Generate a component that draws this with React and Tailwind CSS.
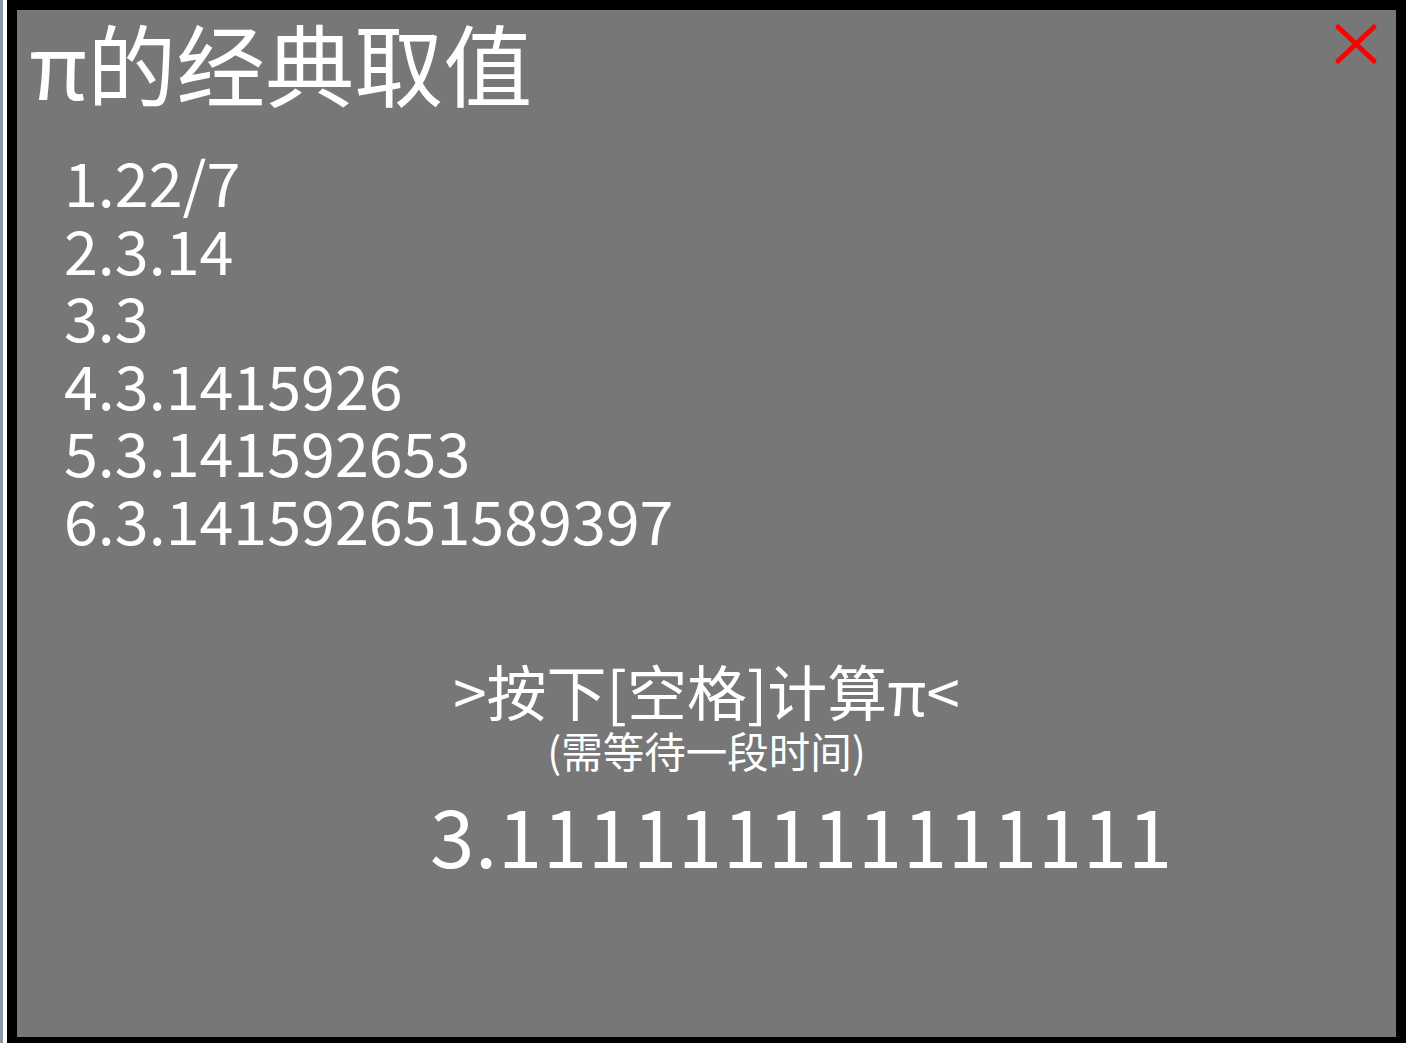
import React from 'react';

const values = ['1.22/7', '2.3.14', '3.3', '4.3.1415926', '5.3.141592653', '6.3.141592651589397'];

const CloseIcon = () => (
  <svg width="44" height="42" viewBox="0 0 44 42" fill="none">
    <path d="M4 4 L40 38 M40 4 L4 38" stroke="#ff0000" strokeWidth="5" strokeLinecap="round" />
  </svg>
);

const App = () => {
  return (
    <div className="flex w-[1406px] h-[1043px] overflow-hidden text-white font-['Microsoft_YaHei','Noto_Sans_CJK_SC',sans-serif]">
      {/* window edge */}
      <div className="w-[3px] bg-[#8b95a9]" />
      <div className="w-[4px] bg-white" />
      <div className="flex-1 flex bg-black pt-[10px] pl-[10px] pr-[10px] pb-[6px]">
        <div className="flex-1 flex flex-col bg-[#777777]">
          {/* header */}
          <div className="flex justify-between items-start">
            <h1 className="pl-[12px] pt-[2px] text-[89px] leading-[100px]">π的经典取值</h1>
            <button className="mt-[13px] mr-[18px]">
              <CloseIcon />
            </button>
          </div>
          {/* list */}
          <ul className="pl-[47px] mt-[35px] text-[61px] leading-[67.5px]">
            {values.map((v) => (
              <li key={v}>{v}</li>
            ))}
          </ul>
          {/* action */}
          <div className="mt-[104px] flex flex-col items-center">
            <p className="text-[60px] leading-[68px]">&gt;按下[空格]计算π&lt;</p>
            <p className="text-[41.5px] leading-[52px]">(需等待一段时间)</p>
          </div>
          <p className="pl-[413px] mt-[12px] text-[80px] leading-[90px] tracking-[0.6px]">3.111111111111111</p>
        </div>
      </div>
    </div>
  );
};

export default App;
